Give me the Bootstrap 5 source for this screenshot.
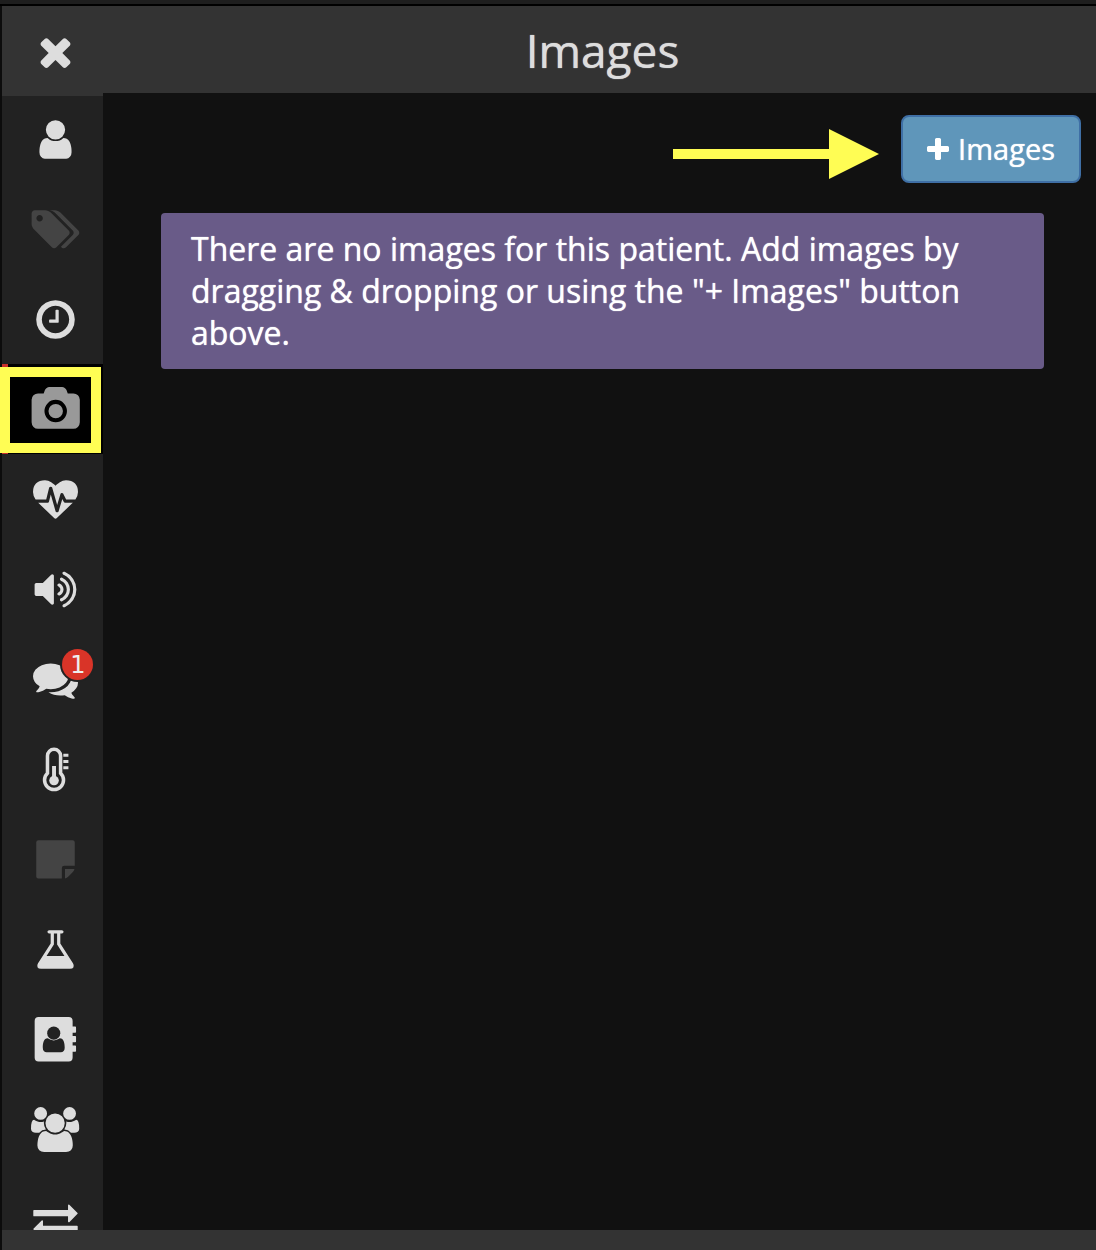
<!DOCTYPE html>
<html lang="en" data-bs-theme="dark">
<head>
<meta charset="utf-8">
<meta name="viewport" content="width=device-width, initial-scale=1">
<title>Images</title>
<link href="https://cdn.jsdelivr.net/npm/bootstrap@5.3.0/dist/css/bootstrap.min.css" rel="stylesheet">
<style>
  body { background: #111; color: #ddd; font-family: "Open Sans", "Noto Sans", sans-serif; font-weight: 500; text-shadow: 0 0 1px currentColor; }
  .top-edge { height: 6px; background: #1e1e1e; border-bottom: 2px solid #000; }
  .side-rail { width: 103px; padding-left: 2px; background: #222; box-shadow: inset 2px 0 #0c0c0c; }
  .rail-item { height: 90px; padding: 1px 0 0; color: #ddd; background: transparent; border: 0; border-left: 6px solid transparent; }
  .rail-close { background: #333; border-left-color: #333; }
  .rail-list { margin-top: -2px; }
  .rail-item.is-muted { color: #444; }
  .rail-item.is-current { color: #999; background: #000; border-left-color: #c9302c; }
  .rail-item svg { height: 45px; fill: currentColor; display: block; }
  .spotlight { position: absolute; left: -8px; top: 3px; width: 101px; height: 86px; border: 10px solid #fffd54; pointer-events: none; }
  .unread { position: absolute; right: 10px; top: 15px; width: 31px; height: 31px; padding-left: 1px; border-radius: 50%; background: #d93428; color: #eee; box-shadow: 0 0 0 2px #222; font: 24px/33px "DejaVu Sans", sans-serif; text-align: center; text-shadow: none; }
  .panel-head { height: 87px; background: #333; padding-left: 6px; }
  .panel-head h1 { font-size: 46px; line-height: 60px; font-weight: 500; color: #ddd; }
  .toolbar { padding: 22px 15px 0; gap: 22px; }
  .pointer-arrow { margin-bottom: 4px; fill: #fffd54; }
  .btn-add { height: 68px; padding: 0 24px; gap: 9px; border: 2px solid #3f6fa5; border-radius: 8px; background: #5f96ba; color: #fff; font-size: 29px; font-weight: 500; line-height: 40px; text-shadow: inherit; }
  .btn-add:hover { background: #5287ab; color: #fff; }
  .empty-note { margin: 30px 52px 0 58px; padding: 15px 30px; border: 0; border-radius: 4px; background: #695b88; color: #fff; font-size: 32px; line-height: 42px; }
  .bottom-bar { height: 20px; background: #333; border-left: 2px solid #0c0c0c; }
</style>
<script src="https://cdn.jsdelivr.net/npm/bootstrap@5.3.0/dist/js/bootstrap.bundle.min.js"></script>
</head>
<body>
<div class="vh-100 d-flex flex-column overflow-hidden">
  <div class="top-edge flex-shrink-0"></div>
  <div class="flex-grow-1 d-flex flex-column overflow-hidden">
    <div class="flex-grow-1 d-flex overflow-hidden">
      <nav class="side-rail flex-shrink-0 d-flex flex-column overflow-hidden" aria-label="Patient sections">
        <button type="button" class="rail-item rail-close flex-shrink-0 d-flex align-items-center justify-content-center" aria-label="Close">
          <svg viewBox="0 0 1792 1792"><path d="M1490 1322q0 40-28 68l-136 136q-28 28-68 28t-68-28l-294-294-294 294q-28 28-68 28t-68-28l-136-136q-28-28-28-68t28-68l294-294-294-294q-28-28-28-68t28-68l136-136q28-28 68-28t68 28l294 294 294-294q28-28 68-28t68 28l136 136q28 28 28 68t-28 68l-294 294 294 294q28 28 28 68z"/></svg>
        </button>
        <div class="rail-list d-flex flex-column">
          <a href="#" class="rail-item flex-shrink-0 d-flex align-items-center justify-content-center" aria-label="Patient">
            <svg viewBox="0 0 1792 1792"><path d="M1536 1399q0 109-62.5 187t-150.5 78h-854q-88 0-150.5-78t-62.5-187q0-85 8.5-160.5t31.5-152 58.5-131 94-89 134.5-34.5q131 128 313 128t313-128q76 0 134.5 34.5t94 89 58.5 131 31.5 152 8.5 160.5zm-256-887q0 159-112.5 271.5t-271.5 112.5-271.5-112.5-112.5-271.5 112.5-271.5 271.5-112.5 271.5 112.5 112.5 271.5z"/></svg>
          </a>
          <a href="#" class="rail-item is-muted flex-shrink-0 d-flex align-items-center justify-content-center" aria-label="Tags">
            <svg viewBox="64 0 2048 1792"><path d="M576 448q0-53-37.500-90.500t-90.500-37.500-90.500 37.500-37.500 90.500 37.500 90.500 90.500 37.500 90.500-37.500 37.500-90.500zm1067 576q0 53-37 90l-491 492q-39 37-91 37-53 0-90-37l-715-716q-38-37-64.500-101t-26.500-117v-416q0-52 38-90t90-38h416q53 0 117 26.500t102 64.500l715 714q37 39 37 91zm384 0q0 53-37 90l-491 492q-39 37-91 37-36 0-59-14t-53-45l470-470q37-37 37-90 0-52-37-91l-715-714q-38-38-102-64.500t-117-26.500h224q53 0 117 26.500t102 64.500l715 714q37 39 37 91z"/></svg>
          </a>
          <a href="#" class="rail-item flex-shrink-0 d-flex align-items-center justify-content-center" aria-label="History">
            <svg viewBox="0 0 1792 1792"><path d="M1024 544v448q0 14-9 23t-23 9h-320q-14 0-23-9t-9-23v-64q0-14 9-23t23-9h224v-352q0-14 9-23t23-9h64q14 0 23 9t9 23zm416 352q0-148-73-273t-198-198-273-73-273 73-198 198-73 273 73 273 198 198 273 73 273-73 198-198 73-273zm224 0q0 209-103 385.500t-279.500 279.500-385.500 103-385.500-103-279.500-279.500-103-385.500 103-385.500 279.500-279.500 385.500-103 385.500 103 279.500 279.500 103 385.500z"/></svg>
          </a>
          <a href="#" class="rail-item is-current position-relative flex-shrink-0 d-flex align-items-center justify-content-center" aria-label="Images" aria-current="page">
            <svg viewBox="0 0 2048 1792"><path d="M1024 672q119 0 203.500 84.500t84.500 203.500-84.500 203.500-203.500 84.500-203.500-84.500-84.500-203.500 84.500-203.500 203.500-84.500zm704-416q106 0 181 75t75 181v896q0 106-75 181t-181 75h-1408q-106 0-181-75t-75-181v-896q0-106 75-181t181-75h224l51-136q19-49 69.500-84.500t103.500-35.500h512q53 0 103.500 35.500t69.500 84.500l51 136h224zm-704 1152q185 0 316.500-131.500t131.500-316.500-131.500-316.500-316.500-131.500-316.500 131.500-131.500 316.500 131.500 316.500 316.500 131.500z"/></svg>
            <span class="spotlight"></span>
          </a>
          <a href="#" class="rail-item flex-shrink-0 d-flex align-items-center justify-content-center" aria-label="Vitals">
            <svg viewBox="0 0 1792 1792"><path d="M1280 1024h305q-5 6-10 10.500t-9 7.500l-3 4-623 600q-18 18-44 18t-44-18l-624-602q-5-2-21-20h369q22 0 39.500-13.500t22.500-34.500l70-281 190 667q6 20 23 33t39 13q21 0 38-13t23-33l146-485 56 112q18 35 57 35zm512-428q0 145-103 300h-369l-111-221q-8-17-25.500-27t-36.500-8q-45 5-56 46l-129 430-196-686q-6-20-23.500-33t-39.500-13-39 13.500-22 34.500l-116 464h-423q-103-155-103-300 0-220 127-344t351-124q62 0 126.500 21.500t120 58 95.500 68.500 76 68q36-36 76-68t95.500-68.500 120-58 126.500-21.500q224 0 351 124t127 344z"/></svg>
          </a>
          <a href="#" class="rail-item flex-shrink-0 d-flex align-items-center justify-content-center" aria-label="Audio">
            <svg viewBox="0 0 1792 1792"><path d="M832 352v1088q0 26-19 45t-45 19-45-19l-333-333h-262q-26 0-45-19t-19-45v-384q0-26 19-45t45-19h262l333-333q19-19 45-19t45 19 19 45zm384 544q0 76-42.500 141.500t-112.500 93.500q-10 5-25 5-26 0-45-18.500t-19-45.500q0-21 12-35.500t29-25 34-23 29-36 12-56.500-12-56.500-29-36-34-23-29-25-12-35.500q0-27 19-45.500t45-18.500q15 0 25 5 70 27 112.500 93t42.500 142zm256 0q0 153-85 282.500t-225 188.500q-13 5-25 5-27 0-46-19t-19-45q0-39 39-59 56-29 76-44 74-54 115.500-135.500t41.500-173.500-41.500-173.500-115.500-135.500q-20-15-76-44-39-20-39-59 0-26 19-45t45-19q13 0 26 5 140 59 225 188.500t85 282.500zm256 0q0 230-127 422.500t-338 283.500q-13 5-26 5-26 0-45-19t-19-45q0-36 39-59 7-4 22.500-10.500t22.500-10.500q46-25 82-51 123-91 192-227t69-289-69-289-192-227q-36-26-82-51-7-4-22.500-10.500t-22.500-10.500q-39-23-39-59 0-26 19-45t45-19q13 0 26 5 211 91 338 283.500t127 422.500z"/></svg>
          </a>
          <a href="#" class="rail-item position-relative flex-shrink-0 d-flex align-items-center justify-content-center text-decoration-none" aria-label="Messages, 1 unread">
            <svg viewBox="0 0 1792 1792"><path d="M1408 768q0 139-94 257t-256.500 186.500-353.500 68.500q-86 0-176-16-124 88-278 128-36 9-86 16h-3q-11 0-20.500-8t-11.500-21q-1-3-1-6.500t.5-6.500 2-6l2.500-5t3.500-5.500 4-5 4.500-5 4-4.500q5-6 23-25t26-29.500 22.500-29 25-38.500 20.500-44q-124-72-195-177t-71-224q0-139 94-257t256.500-186.500 353.500-68.500 353.500 68.500 256.500 186.500 94 257zm384 256q0 120-71 224.500t-195 176.500q10 24 20.500 44t25 38.500 22.500 29 26 29.500 23 25q1 1 4 4.500t4.500 5 4 5 3.500 5.500l2.500 5t2 6 .5 6.500-1 6.500q-3 14-13 22t-22 7q-50-7-86-16-154-40-278-128-90 16-176 16-271 0-472-132 58 4 88 4 161 0 309-45t264-129q125-92 192-212t67-254q0-77-23-152 129 71 204 178t75 230z"/></svg>
            <span class="unread">1</span>
          </a>
          <a href="#" class="rail-item flex-shrink-0 d-flex align-items-center justify-content-center" aria-label="Temperature">
            <svg viewBox="0 0 46 46"><path d="M14.800 26.800V9a6.700 6.700 0 0 1 13.400 0v17.800a9.700 9.700 0 1 1-13.400 0z" fill="none" stroke="currentColor" stroke-width="3.600"/><circle cx="21.500" cy="34.300" r="4.900"/><path d="M19.500 19.500h4v12h-4zM31 6.800h5.200v3.200H31zM31 13.200h5.200v3.200H31zM31 19.600h5.200v3.200H31z"/></svg>
          </a>
          <a href="#" class="rail-item is-muted flex-shrink-0 d-flex align-items-center justify-content-center" aria-label="Notes">
            <svg viewBox="0 0 46 46"><path d="M5.500 3.300h35a2.200 2.200 0 0 1 2.200 2.200v23.800H32a2.500 2.500 0 0 0-2.500 2.500v10.700h-24a2.200 2.200 0 0 1-2.200-2.200V5.500a2.200 2.200 0 0 1 2.200-2.200zM32.700 32.600h9.700c-.3 1.400-.9 2.500-1.900 3.500l-4.300 4.300c-1 1-2.100 1.600-3.500 1.900z"/></svg>
          </a>
          <a href="#" class="rail-item flex-shrink-0 d-flex align-items-center justify-content-center" aria-label="Labs">
            <svg viewBox="0 0 1792 1792"><path d="M1591 1448q56 89 21.500 152.500t-140.500 63.500h-1152q-106 0-140.500-63.500t21.500-152.500l503-793v-399h-64q-26 0-45-19t-19-45 19-45 45-19h512q26 0 45 19t19 45-19 45-45 19h-64v399zm-779-725l-272 429h712l-272-429-20-31v-436h-128v436z"/></svg>
          </a>
          <a href="#" class="rail-item flex-shrink-0 d-flex align-items-center justify-content-center" aria-label="Contacts">
            <svg viewBox="0 0 46 46"><path d="M5.700 0h30.800a4 4 0 0 1 4 4v5.700h2.700a.8.800 0 0 1 .8.800v4.800a.8.800 0 0 1-.8.800h-2.700v3.300h2.700a.8.800 0 0 1 .8.800v4.800a.8.800 0 0 1-.8.800h-2.700v3.300h2.700a.8.800 0 0 1 .8.800v4.800a.8.800 0 0 1-.8.800h-2.700v6a4 4 0 0 1-4 4H5.700a4 4 0 0 1-4-4V4a4 4 0 0 1 4-4z"/><g fill="#222"><circle cx="21.200" cy="16.500" r="6.700"/><path d="M15 21.700q6.200 4.400 12.400 0c4 0 5 5 5 9.800 0 3-1.500 4.600-4 4.600H14c-2.500 0-4-1.600-4-4.600 0-4.800 1-9.800 5-9.800z"/></g></svg>
          </a>
          <a href="#" class="rail-item flex-shrink-0 d-flex align-items-center justify-content-center" aria-label="Care team">
            <svg viewBox="0 0 1920 1792"><path d="M593 896q-162 5-265 128h-134q-82 0-138-40.500t-56-118.500q0-353 124-353 6 0 43.500 21t97.500 42.500 119 21.500q67 0 133-23-5 37-5 66 0 139 81 256zm1071 637q0 120-73 189.500t-194 69.500h-874q-121 0-194-69.500t-73-189.500q0-53 3.500-103.500t14-109 26.500-108.500 43-97.500 62-81 85.500-53.500 111.500-20q10 0 43 21.500t73 48 107 48 135 21.500 135-21.500 107-48 73-48 43-21.500q61 0 111.500 20t85.500 53.500 62 81 43 97.500 26.500 108.500 14 109 3.500 103.500zm-1024-1277q0 106-75 181t-181 75-181-75-75-181 75-181 181-75 181 75 75 181zm704 384q0 159-112.500 271.500t-271.500 112.500-271.500-112.500-112.500-271.500 112.500-271.500 271.500-112.500 271.500 112.500 112.500 271.500zm576 225q0 78-56 118.500t-138 40.500h-134q-103-123-265-128 81-117 81-256 0-29-5-66 66 23 133 23 59 0 119-21.500t97.500-42.500 43.500-21q124 0 124 353zm-128-609q0 106-75 181t-181 75-181-75-75-181 75-181 181-75 181 75 75 181z"/></svg>
          </a>
          <a href="#" class="rail-item flex-shrink-0 d-flex align-items-center justify-content-center" aria-label="Transfer">
            <svg viewBox="0 0 46 46"><path d="M1 13.300h34.800V8.500q.2-1.200 1.300-.6l8.200 8.200q.7.700 0 1.400l-8.200 8.200q-1.100.6-1.300-.6v-5.300H1q-.7 0-.7-.7v-5.100q0-.7.7-.7zM45 29.300H10.200v-4.800q-.2-1.200-1.300-.6L.7 32.100q-.7.700 0 1.400l8.200 8.200q1.100.6 1.300-.6v-5.300H45q.7 0 .7-.7V30q0-.7-.7-.7z"/></svg>
          </a>
        </div>
      </nav>
      <main class="flex-grow-1">
        <header class="panel-head d-flex align-items-center justify-content-center">
          <h1 class="m-0">Images</h1>
        </header>
        <div class="toolbar d-flex justify-content-end align-items-end">
          <svg class="pointer-arrow" width="206" height="50" viewBox="0 0 206 50" aria-hidden="true"><path d="M0 20h156V0l50 25-50 25V30H0z"/></svg>
          <button type="button" class="btn btn-add d-inline-flex align-items-center">
            <svg width="22" height="22" viewBox="192 128 1408 1408" fill="currentColor" aria-hidden="true"><path d="M1600 736v192q0 40-28 68t-68 28h-416v416q0 40-28 68t-68 28h-192q-40 0-68-28t-28-68v-416h-416q-40 0-68-28t-28-68v-192q0-40 28-68t68-28h416v-416q0-40 28-68t68-28h192q40 0 68 28t28 68v416h416q40 0 68 28t28 68z"/></svg>
            Images
          </button>
        </div>
        <div class="alert empty-note" role="status">There are no images for this patient. Add images by dragging &amp; dropping or using the "+ Images" button above.</div>
      </main>
    </div>
    <div class="bottom-bar flex-shrink-0"></div>
  </div>
</div>
</body>
</html>
